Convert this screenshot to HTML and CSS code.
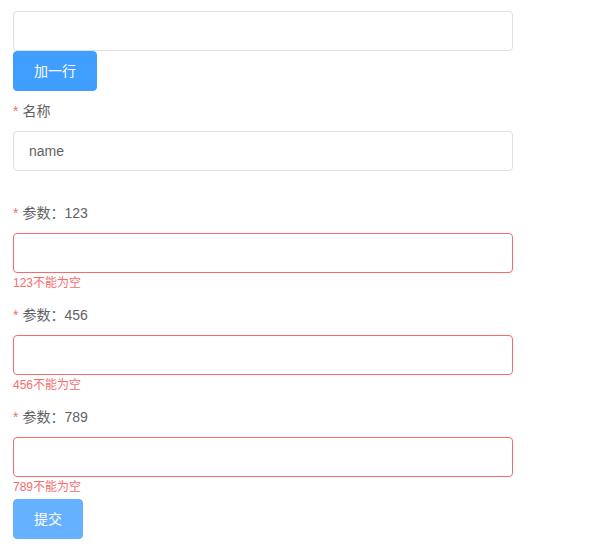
FILE: index.html
```html
<!DOCTYPE html>
<html>
<head>
<meta charset="utf-8">
<link rel="stylesheet" href="styles.css">
</head>
<body>
<div class="page">
  <div class="input"></div>
  <button class="btn">加一行</button>
  <div class="item">
    <div class="label"><span class="star">*</span>名称</div>
    <div class="input"><span class="val">name</span></div>
  </div>
  <div class="item">
    <div class="label"><span class="star">*</span>参数：123</div>
    <div class="input error"></div>
    <div class="err">123不能为空</div>
  </div>
  <div class="item">
    <div class="label"><span class="star">*</span>参数：456</div>
    <div class="input error"></div>
    <div class="err">456不能为空</div>
  </div>
  <div class="item">
    <div class="label"><span class="star">*</span>参数：789</div>
    <div class="input error"></div>
    <div class="err">789不能为空</div>
  </div>
  <button class="btn light">提交</button>
</div>
</body>
</html>
```
FILE: styles.css
```css
html, body { margin: 0; padding: 0; background: #fff; }
body {
  font-family: "Liberation Sans", Arial, "Noto Sans CJK SC", sans-serif;
  font-size: 14px;
  color: #606266;
}
.page {
  width: 500px;
  padding: 11px 0 0 13px;
  display: flex;
  flex-direction: column;
  align-items: flex-start;
}
.input {
  box-sizing: border-box;
  width: 500px;
  height: 40px;
  border: 1px solid #dcdfe6;
  border-radius: 4px;
  display: flex;
  align-items: center;
  padding: 0 15px;
}
.input.error { border-color: #f56c6c; }
.val { color: #606266; font-size: 14px; }
.btn {
  box-sizing: border-box;
  height: 40px;
  padding: 0 20px;
  border: 1px solid #409eff;
  background: #409eff;
  color: #fff;
  border-radius: 4px;
  font-family: inherit;
  font-size: 14px;
  line-height: 1;
}
.btn.light { background: #66b1ff; border-color: #66b1ff; }
.item {
  position: relative;
  margin-bottom: 22px;
}
.label {
  height: 40px;
  line-height: 40px;
  font-size: 14px;
  color: #606266;
}
.star { color: #f56c6c; margin-right: 4px; }
.err {
  position: absolute;
  top: 100%;
  left: 0;
  padding-top: 4px;
  font-size: 12px;
  line-height: 1;
  color: #f56c6c;
}
```
